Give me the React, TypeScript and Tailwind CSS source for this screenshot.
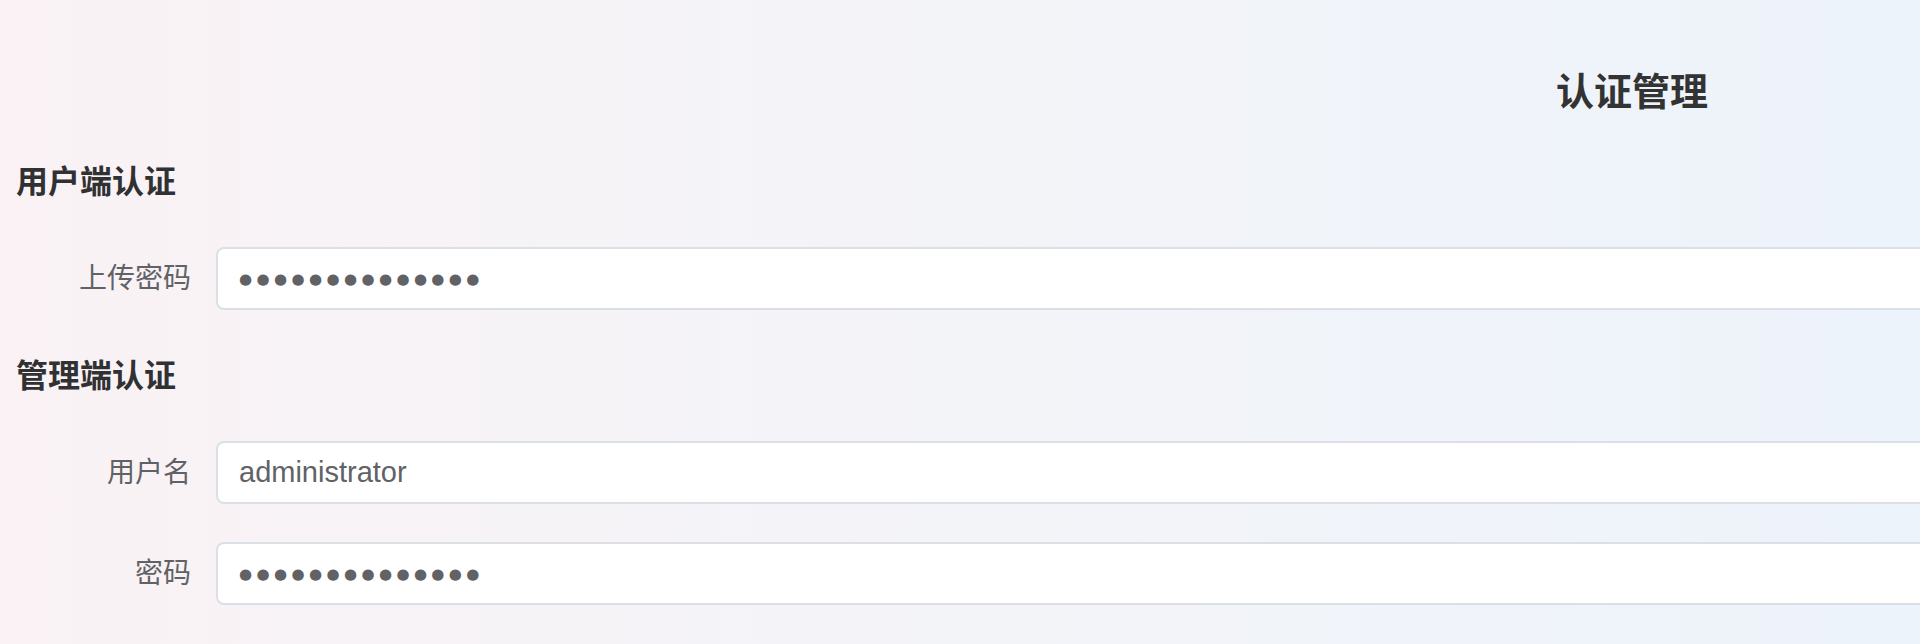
const font = "font-['Liberation_Sans','Noto_Sans_CJK_SC',sans-serif]";

function Field({ label, value, secret }: { label: string; value: string; secret?: boolean }) {
  return (
    <div className="flex items-center">
      <label className="w-[216px] shrink-0 pr-[25px] text-right text-[28px] leading-[40px] text-[#606266]">{label}</label>
      <input
        readOnly
        type="text"
        value={value}
        className={
          "h-[63px] flex-1 rounded-[8px] border-2 border-[#dcdfe6] bg-white pl-[21px] text-[#606266] outline-none " +
          (secret ? "font-['DejaVu_Sans',sans-serif] text-[15px] tracking-[4.4px]" : "text-[29px]")
        }
      />
    </div>
  );
}

export default function App() {
  const dots = "●".repeat(14);
  return (
    <div className={`h-[644px] w-full overflow-hidden bg-gradient-to-r from-[#faf2f5] via-[#f3f4f8] to-[#edf3fb] ${font}`}>
      <div className="w-[3264px] pt-[64px]">
        <h1 className="text-center text-[38px] font-bold leading-[56px] text-[#333333]">认证管理</h1>

        <h2 className="mt-[40px] pl-[16px] text-[32px] font-bold leading-[44px] text-[#303133]">用户端认证</h2>
        <div className="mt-[43px]">
          <Field label="上传密码" value={dots} secret />
        </div>

        <h2 className="mt-[44px] pl-[16px] text-[32px] font-bold leading-[44px] text-[#303133]">管理端认证</h2>
        <div className="mt-[43px] flex flex-col gap-[38px]">
          <Field label="用户名" value="administrator" />
          <Field label="密码" value={dots} secret />
        </div>
      </div>
    </div>
  );
}
